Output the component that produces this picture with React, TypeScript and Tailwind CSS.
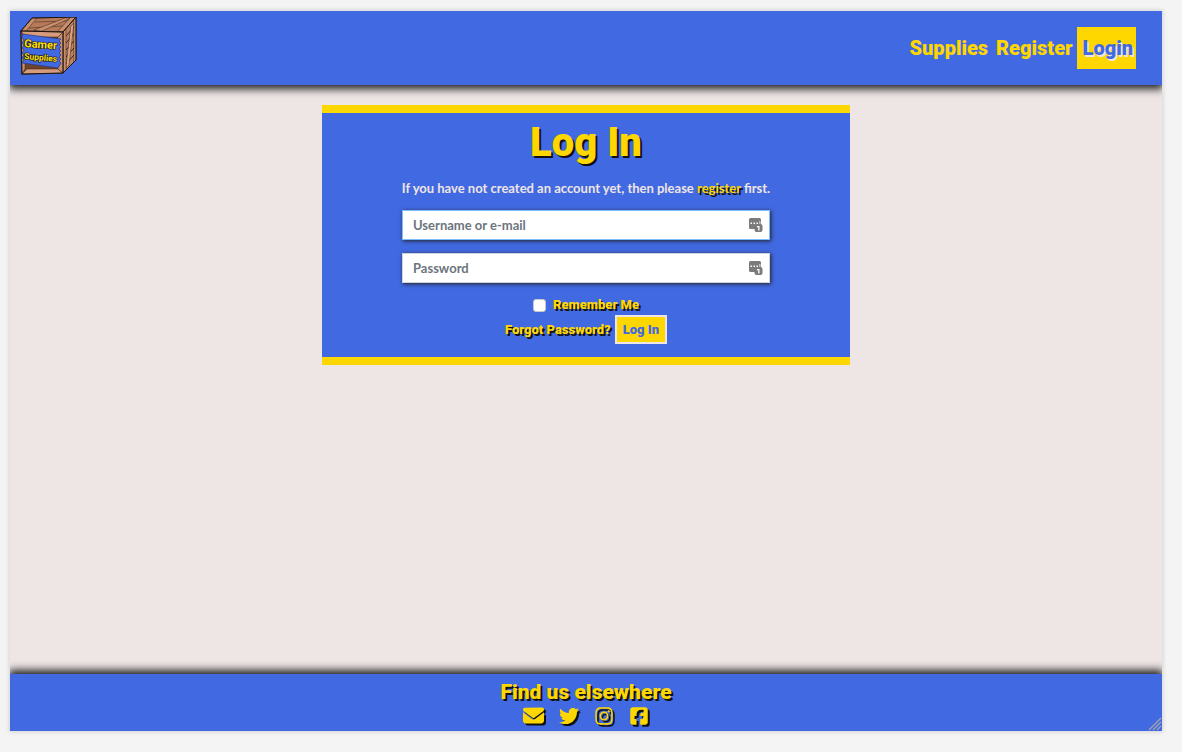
import React from 'react';
import { FaEnvelope, FaTwitter, FaInstagram, FaSquareFacebook } from 'react-icons/fa6';

const DISPLAY = "font-['Roboto','Inter',sans-serif] font-black";
const SHADOW = '[text-shadow:2px_2px_0_#111]';

function CrateLogo() {
  return (
    <svg viewBox="5 5 58 62" className="h-[62px] w-[58px]" role="img" aria-label="Gamer Supplies">
      <g stroke="#3a2519" strokeWidth=".5" strokeLinejoin="round" strokeLinecap="round">
        <path d="M6 19 17 6 61 5 48 20Z" fill="#b57a59" />
        <path d="M14 16 48 14M20 10 54 9" fill="none" />
        <path d="M19 18 50 6 56 6 27 19Z" fill="#c98e6d" />
        <path d="M6 19 17 6 22 6 11 19ZM43 19 56 5 61 5 48 20Z" fill="#c98e6d" />
        <path d="M48 20 61 5V48L48 61Z" fill="#bd8261" />
        <path d="M51 24 59 15M51 31 59 22M51 38 59 29M51 45 59 36M51 52 59 43" fill="none" strokeWidth="1" />
        <path d="M56 14 59 11 54 53 51 56Z" fill="#dba583" />
        <path d="M48 20 51 17V58L48 61ZM59 7 61 5V48L59 50Z" fill="#c98e6d" />
        <path d="M6 19 48 20V61L7 62Z" fill="#70432d" />
        <path d="M6 19 48 20 43 25H10Z" fill="#d69c7b" />
        <path d="M7 62 12 57H43L48 61Z" fill="#d69c7b" />
        <path d="M43 25 48 20V61L43 57Z" fill="#c98e6d" />
        <path d="M6 19 10 25V57L7 62Z" fill="#c98e6d" />
      </g>
      <path d="M6 19 17 6 61 5V48L48 61 7 62ZM6 19 48 20 61 5M48 20V61" fill="none" stroke="#1c1410" strokeWidth="1" strokeLinejoin="round" />
      <path d="M7 22 46 27 44 29 46 31 44 33 46 35 44 37 46 39 44 41 46 43 44 45 46 47 44 49 46 51 43 56 7 51 9 48 7 46 9 43 7 41 9 38 7 36 9 33 7 31 9 28 7 26Z" fill="#4169e1" stroke="#26377c" strokeWidth=".7" />
      <g fill="#ffe000" stroke="#17152b" strokeWidth="1.300" paintOrder="stroke" fontWeight="700" fontFamily="'Roboto',sans-serif">
        <text x="9" y="35" fontSize="11" transform="rotate(4 9 35)">Gamer</text>
        <text x="9" y="47" fontSize="8.500" transform="rotate(5 9 47)">Supplies</text>
      </g>
    </svg>
  );
}

function ManagerIcon() {
  return (
    <svg viewBox="0 0 14 15" className="pointer-events-none absolute right-[7px] top-2 h-[15px] w-[14px]" aria-hidden="true">
      <path d="M1.500 0h9A1.500 1.500 0 0 1 12 1.500V6H8a2 2 0 0 0-2 2v3H1.500A1.500 1.500 0 0 1 0 9.500v-8A1.500 1.500 0 0 1 1.500 0Z" fill="#7b7b7b" />
      <path d="M1.500 4.500h1.500v1.500H1.500zM4.500 4.500H6V6H4.500zM7.500 4.500H9V6H7.500zM10.500 3h.8v3h-.8z" fill="#fff" />
      <rect x="5.500" y="6" width="8" height="8" rx="2" fill="#7b7b7b" />
      <path d="M8 8h2.500V12.500H9.200V9.300H8z" fill="#fff" />
    </svg>
  );
}

function Field({ id, label, type, border }: { id: string; label: string; type: string; border: string }) {
  return (
    <label htmlFor={id} aria-label={label} className="relative block w-full">
      <input
        id={id}
        type={type}
        placeholder={label}
        aria-label={label}
        className={`block h-[30px] w-full border bg-white pl-[10px] pr-8 text-[13px] font-bold text-gray-700 shadow-[1px_1px_4px_#222] outline-none placeholder:text-[#6c757d] ${border}`}
      />
      <ManagerIcon />
    </label>
  );
}

const socials = [
  { name: 'E-mail', Icon: FaEnvelope, size: 'h-[21px] w-[21px]' },
  { name: 'Twitter', Icon: FaTwitter, size: 'h-5 w-5' },
  { name: 'Instagram', Icon: FaInstagram, size: 'h-5 w-5' },
  { name: 'Facebook', Icon: FaSquareFacebook, size: 'h-5 w-5' },
];

export default function App() {
  return (
    <div className="flex min-h-screen flex-col bg-[#f4f4f4] pb-[21px] pl-[10px] pr-5 pt-[11px] font-['Lato',sans-serif]">
      <div className="relative flex flex-1 flex-col bg-[#eee5e5] shadow-[0_0_4px_1px_#d4d4d4]">
        <header className="z-10 flex items-center justify-between bg-[#4169e1] py-[6px] pl-[10px] pr-[26px] shadow-[0_3px_8px_1px_#222] [clip-path:inset(0_0_-24px_0)]">
          <a href="#home"><CrateLogo /></a>
          <nav className={`flex items-center text-xl text-[#ffd700] ${DISPLAY}`}>
            <a href="#supplies" className="px-1">Supplies</a>
            <a href="#register" className="px-1">Register</a>
            <a href="#login" className="bg-[#ffd700] pl-[6px] pr-[3px] leading-[42px] text-[#4169e1] [text-shadow:2px_2px_0_#eee5e5]">Login</a>
          </nav>
        </header>

        <main className="flex flex-1 justify-center">
          <section className="mt-5 flex w-full max-w-[528px] flex-col items-center self-start border-y-8 border-[#ffd700] bg-[#4169e1] pb-[13px] pt-[6px]">
            <h1 className={`text-[40px] leading-[48px] text-[#ffd700] [text-shadow:2px_2px_0_#111] ${DISPLAY}`}>Log In</h1>
            <p className="mt-[11px] text-[13px] font-bold leading-5 text-[#eee5e5]">
              If you have not created an account yet, then please{' '}
              <a href="#register" className={`text-[#ffd700] ${SHADOW}`}>register</a> first.
            </p>
            <form className="mt-3 flex w-full max-w-[368px] flex-col items-center" onSubmit={(e) => e.preventDefault()}>
              <div className="flex w-full flex-col gap-[13px]">
                <Field id="username" label="Username or e-mail" type="text" border="border-[#80bdff]" />
                <Field id="password" label="Password" type="password" border="border-[#ced4da]" />
              </div>
              <div className="mt-3 flex h-5 items-center gap-[7px]">
                <input id="remember" type="checkbox" className="h-[13px] w-[13px] appearance-none rounded-[3px] border border-[#c8c8c8] bg-white checked:bg-[#ffd700]" />
                <label htmlFor="remember" className={`text-[13px] leading-5 text-[#ffd700] ${SHADOW} ${DISPLAY}`}>Remember Me</label>
              </div>
              <div className={`flex items-center gap-1 text-[13px] ${DISPLAY}`}>
                <a href="#forgot" className={`text-[#ffd700] ${SHADOW}`}>Forgot Password?</a>
                <button type="submit" className="h-[29px] border-2 border-[#eee5e5] bg-[#ffd700] px-[6px] text-[#4169e1]">Log In</button>
              </div>
            </form>
          </section>
        </main>

        <footer className="flex flex-col items-center bg-[#4169e1] pb-1 pt-[6px] text-[#ffd700] shadow-[0_-3px_8px_1px_#222] [clip-path:inset(-24px_0_0_0)]">
          <h2 className={`text-[21px] leading-6 ${SHADOW} ${DISPLAY}`}>Find us elsewhere</h2>
          <div className="flex h-[23px] items-center gap-[15px]">
            {socials.map(({ name, Icon, size }) => (
              <a key={name} href={`#${name.toLowerCase()}`} aria-label={name}>
                <Icon className={`${size} drop-shadow-[2px_2px_0_#111]`} />
              </a>
            ))}
          </div>
        </footer>
        <svg viewBox="0 0 14 14" className="absolute bottom-0 right-0 h-[14px] w-[14px]" aria-hidden="true">
          <path d="M1 13 13 1M5 13l8-8M9 13l4-4" stroke="#a6a6a6" strokeWidth="1.200" fill="none" />
        </svg>
      </div>
    </div>
  );
}
